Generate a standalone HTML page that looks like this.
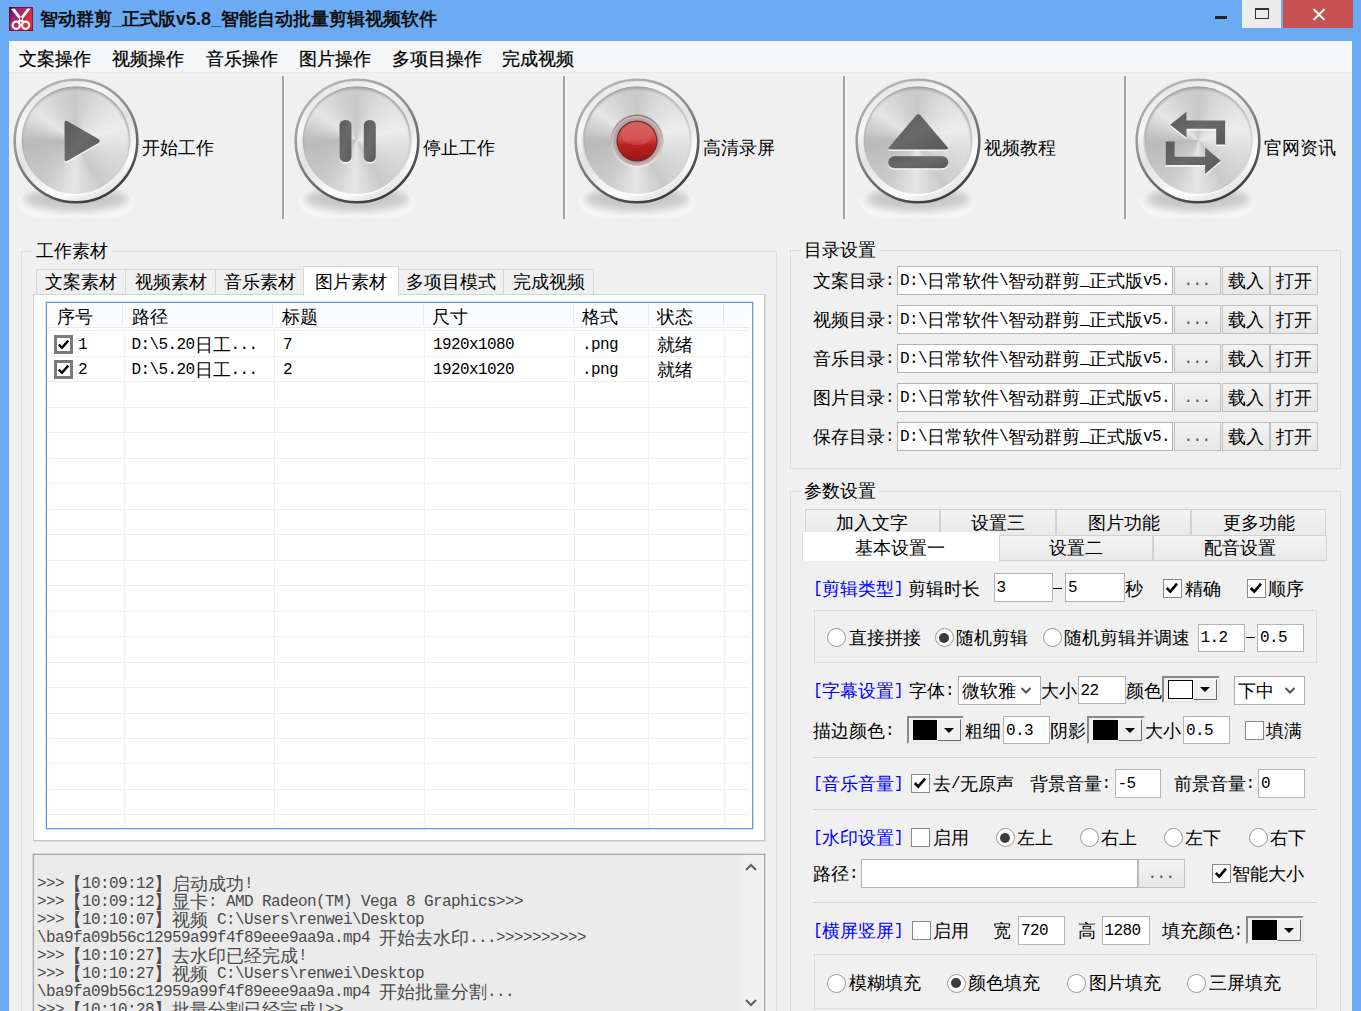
<!DOCTYPE html>
<html><head><meta charset="utf-8"><title>智动群剪</title><style>
*{margin:0;padding:0;box-sizing:border-box}
html,body{width:1361px;height:1011px;overflow:hidden}
body{background:#6aabf4;position:relative;font-family:"Liberation Sans",sans-serif;color:#000}
body div{position:absolute}
.s{font-size:18px;line-height:18px;white-space:nowrap}
.s .a{font-family:"Liberation Mono",monospace;font-size:16px;letter-spacing:-0.6px;line-height:0;position:relative;top:-2px}
.y{font-size:18px;line-height:18px;white-space:nowrap}
.s i,.y i{display:inline-block;width:18px;font-style:normal;text-align:center}
</style></head><body>
<div style="left:9px;top:7px;width:24px;height:24px;background:linear-gradient(125deg,#4a0e2e 0%,#9a2478 28%,#c42a5a 55%,#e0382e 80%,#b8202c 100%);box-shadow:inset 0 0 0 1px rgba(60,0,20,.5)">
<svg width="24" height="24" viewBox="0 0 24 24" style="position:absolute;left:0;top:0">
<g fill="#fff"><path d="M2,2 L5.6,1.6 L15.2,14.6 L13.4,16.2 Z"/><path d="M21.6,1.8 L18.2,1.4 L8.6,14.6 L10.4,16.2 Z"/></g>
<g stroke="#fff" stroke-width="2.2" fill="none"><circle cx="7.2" cy="18.2" r="3.6"/><circle cx="16.6" cy="18.2" r="3.6"/></g>
<rect x="11" y="10.6" width="2" height="2" fill="#a01838"/></svg></div>
<div class="y" style="left:40px;top:10px;font-weight:bold;color:#111"><i>智</i><i>动</i><i>群</i><i>剪</i>_<i>正</i><i>式</i><i>版</i>v5.8_<i>智</i><i>能</i><i>自</i><i>动</i><i>批</i><i>量</i><i>剪</i><i>辑</i><i>视</i><i>频</i><i>软</i><i>件</i></div>
<div style="left:1215px;top:16px;width:12px;height:3px;background:#222"></div>
<div style="left:1242px;top:0px;width:39px;height:28px;background:#ececec"></div>
<div style="left:1255px;top:8px;width:14px;height:11px;border:1px solid #333;border-top-width:2px"></div>
<div style="left:1283px;top:0px;width:70px;height:28px;background:#c75050"></div>
<svg style="position:absolute;left:1312px;top:8px" width="14" height="13" viewBox="0 0 14 13"><g stroke="#fff" stroke-width="2"><line x1="1.5" y1="1" x2="12.5" y2="12"/><line x1="12.5" y1="1" x2="1.5" y2="12"/></g></svg>
<div style="left:9px;top:41px;width:1343px;height:970px;background:#f0f0f0"></div>
<div style="left:9px;top:41px;width:1343px;height:31px;background:#f5f6f7"></div>
<div style="left:9px;top:72px;width:1343px;height:1px;background:#e9eaec"></div>
<div class="y" style="left:19px;top:50px;color:#000;-webkit-text-stroke:0.25px #000"><i>文</i><i>案</i><i>操</i><i>作</i></div>
<div class="y" style="left:112px;top:50px;color:#000;-webkit-text-stroke:0.25px #000"><i>视</i><i>频</i><i>操</i><i>作</i></div>
<div class="y" style="left:206px;top:50px;color:#000;-webkit-text-stroke:0.25px #000"><i>音</i><i>乐</i><i>操</i><i>作</i></div>
<div class="y" style="left:299px;top:50px;color:#000;-webkit-text-stroke:0.25px #000"><i>图</i><i>片</i><i>操</i><i>作</i></div>
<div class="y" style="left:392px;top:50px;color:#000;-webkit-text-stroke:0.25px #000"><i>多</i><i>项</i><i>目</i><i>操</i><i>作</i></div>
<div class="y" style="left:502px;top:50px;color:#000;-webkit-text-stroke:0.25px #000"><i>完</i><i>成</i><i>视</i><i>频</i></div>
<div style="left:282px;top:76px;width:2px;height:143px;background:#a3a3a3"></div>
<div style="left:284px;top:76px;width:1px;height:143px;background:#f9f9f9"></div>
<div style="left:563px;top:76px;width:2px;height:143px;background:#a3a3a3"></div>
<div style="left:565px;top:76px;width:1px;height:143px;background:#f9f9f9"></div>
<div style="left:843px;top:76px;width:2px;height:143px;background:#a3a3a3"></div>
<div style="left:845px;top:76px;width:1px;height:143px;background:#f9f9f9"></div>
<div style="left:1124px;top:76px;width:2px;height:143px;background:#a3a3a3"></div>
<div style="left:1126px;top:76px;width:1px;height:143px;background:#f9f9f9"></div>
<svg width="0" height="0" style="position:absolute"><defs><linearGradient id="gOut" x1="0.2" y1="0" x2="0.7" y2="1"><stop offset="0" stop-color="#bababa"/><stop offset="0.45" stop-color="#8e8e8e"/><stop offset="1" stop-color="#383838"/></linearGradient><linearGradient id="gRing" x1="0.1" y1="0" x2="0.6" y2="1"><stop offset="0" stop-color="#dedede"/><stop offset="0.3" stop-color="#f6f6f6"/><stop offset="0.55" stop-color="#e2e2e2"/><stop offset="0.85" stop-color="#fdfdfd"/><stop offset="1" stop-color="#e4e4e4"/></linearGradient><linearGradient id="gEdge" x1="0" y1="0" x2="0" y2="1"><stop offset="0" stop-color="#8e8e8e"/><stop offset="0.5" stop-color="#c8c8c8"/><stop offset="1" stop-color="#ffffff"/></linearGradient><linearGradient id="gIcon" x1="0" y1="0" x2="1" y2="1"><stop offset="0" stop-color="#5a5a5a"/><stop offset="0.5" stop-color="#6a6a6a"/><stop offset="1" stop-color="#585858"/></linearGradient><filter id="fBlur1" x="-20%" y="-50%" width="140%" height="200%"><feGaussianBlur stdDeviation="1.2"/></filter><filter id="fBlur4" x="-30%" y="-80%" width="160%" height="260%"><feGaussianBlur stdDeviation="4"/></filter><radialGradient id="gShadow" cx="0.5" cy="0.42" r="0.5"><stop offset="0" stop-color="#b4b4b4"/><stop offset="0.5" stop-color="#c8c8c8"/><stop offset="0.8" stop-color="#e4e4e4"/><stop offset="0.93" stop-color="#fcfcfc"/><stop offset="1" stop-color="#f0f0f0" stop-opacity="0"/></radialGradient></defs></svg>
<svg style="position:absolute;left:75.9px;top:140.6px;overflow:visible" width="1" height="1"><rect x="-58.5" y="43.8" width="117" height="33" rx="30" ry="16.5" fill="#f9f9f9" filter="url(#fBlur1)"/><ellipse cx="0" cy="58" rx="53" ry="12.5" fill="#c8c8c8" filter="url(#fBlur4)"/><circle r="61.3" fill="url(#gRing)" stroke="url(#gOut)" stroke-width="2.6"/><circle r="54.5" fill="url(#gEdge)"/></svg>
<div style="left:22.4px;top:87.1px;width:107px;height:107px;border-radius:50%;background:conic-gradient(from 0deg,#c8c8c8 0deg,#dcdcdc 30deg,#ececec 75deg,#d6d6d6 120deg,#cacaca 150deg,#e6e6e6 182deg,#cbcbcb 215deg,#bababa 268deg,#e6e6e6 305deg,#d2d2d2 335deg,#c8c8c8 360deg);box-shadow:inset 0 2px 2px rgba(0,0,0,.18)"></div>
<svg style="position:absolute;left:75.9px;top:140.6px;overflow:visible" width="1" height="1"><g transform="translate(0,1.6)" fill="#fbfbfb" opacity=".9"><path d="M-11.5,-18 Q-11.5,-21.5 -8.5,-19.8 L22.5,-2 Q25,0 22.5,2 L-8.5,19.8 Q-11.5,21.5 -11.5,18 Z"/></g><g fill="url(#gIcon)"><path d="M-11.5,-18 Q-11.5,-21.5 -8.5,-19.8 L22.5,-2 Q25,0 22.5,2 L-8.5,19.8 Q-11.5,21.5 -11.5,18 Z"/></g></svg>
<div class="y" style="left:142.0px;top:139px"><i>开</i><i>始</i><i>工</i><i>作</i></div>
<svg style="position:absolute;left:356.5px;top:140.6px;overflow:visible" width="1" height="1"><rect x="-58.5" y="43.8" width="117" height="33" rx="30" ry="16.5" fill="#f9f9f9" filter="url(#fBlur1)"/><ellipse cx="0" cy="58" rx="53" ry="12.5" fill="#c8c8c8" filter="url(#fBlur4)"/><circle r="61.3" fill="url(#gRing)" stroke="url(#gOut)" stroke-width="2.6"/><circle r="54.5" fill="url(#gEdge)"/></svg>
<div style="left:303.0px;top:87.1px;width:107px;height:107px;border-radius:50%;background:conic-gradient(from 0deg,#c8c8c8 0deg,#dcdcdc 30deg,#ececec 75deg,#d6d6d6 120deg,#cacaca 150deg,#e6e6e6 182deg,#cbcbcb 215deg,#bababa 268deg,#e6e6e6 305deg,#d2d2d2 335deg,#c8c8c8 360deg);box-shadow:inset 0 2px 2px rgba(0,0,0,.18)"></div>
<svg style="position:absolute;left:356.5px;top:140.6px;overflow:visible" width="1" height="1"><g transform="translate(0,1.6)" fill="#fbfbfb" opacity=".9"><rect x="-17.5" y="-21" width="12" height="42" rx="5.5"/><rect x="6.8" y="-21" width="12" height="42" rx="5.5"/></g><g fill="url(#gIcon)"><rect x="-17.5" y="-21" width="12" height="42" rx="5.5"/><rect x="6.8" y="-21" width="12" height="42" rx="5.5"/></g></svg>
<div class="y" style="left:422.6px;top:139px"><i>停</i><i>止</i><i>工</i><i>作</i></div>
<svg style="position:absolute;left:637.1px;top:140.6px;overflow:visible" width="1" height="1"><rect x="-58.5" y="43.8" width="117" height="33" rx="30" ry="16.5" fill="#f9f9f9" filter="url(#fBlur1)"/><ellipse cx="0" cy="58" rx="53" ry="12.5" fill="#c8c8c8" filter="url(#fBlur4)"/><circle r="61.3" fill="url(#gRing)" stroke="url(#gOut)" stroke-width="2.6"/><circle r="54.5" fill="url(#gEdge)"/></svg>
<div style="left:583.6px;top:87.1px;width:107px;height:107px;border-radius:50%;background:conic-gradient(from 0deg,#c8c8c8 0deg,#dcdcdc 30deg,#ececec 75deg,#d6d6d6 120deg,#cacaca 150deg,#e6e6e6 182deg,#cbcbcb 215deg,#bababa 268deg,#e6e6e6 305deg,#d2d2d2 335deg,#c8c8c8 360deg);box-shadow:inset 0 2px 2px rgba(0,0,0,.18)"></div>
<svg style="position:absolute;left:637.1px;top:140.6px;overflow:visible" width="1" height="1"><defs><radialGradient id="gRec" cx="0.5" cy="0.5" r="0.5"><stop offset="0" stop-color="#a89c9c"/><stop offset="0.8" stop-color="#a89c9c"/><stop offset="0.92" stop-color="#b8aaaa"/><stop offset="1" stop-color="#d4c4c4"/></radialGradient><linearGradient id="gRed" x1="0" y1="0" x2="0" y2="1"><stop offset="0" stop-color="#d85c5c"/><stop offset="0.45" stop-color="#cf4444"/><stop offset="0.6" stop-color="#b92222"/><stop offset="1" stop-color="#9e1515"/></linearGradient><linearGradient id="gRecEdge" x1="0" y1="0" x2="0" y2="1"><stop offset="0" stop-color="#8a8080"/><stop offset="1" stop-color="#fde8e8"/></linearGradient></defs><circle r="26.5" fill="url(#gRecEdge)"/><circle r="25" fill="url(#gRec)"/><circle r="20.5" fill="#7a2424"/><circle r="19.3" fill="url(#gRed)"/><ellipse cx="0" cy="-7" rx="16" ry="11" fill="#e07070" opacity=".35"/></svg>
<div class="y" style="left:703.2px;top:139px"><i>高</i><i>清</i><i>录</i><i>屏</i></div>
<svg style="position:absolute;left:917.7px;top:140.6px;overflow:visible" width="1" height="1"><rect x="-58.5" y="43.8" width="117" height="33" rx="30" ry="16.5" fill="#f9f9f9" filter="url(#fBlur1)"/><ellipse cx="0" cy="58" rx="53" ry="12.5" fill="#c8c8c8" filter="url(#fBlur4)"/><circle r="61.3" fill="url(#gRing)" stroke="url(#gOut)" stroke-width="2.6"/><circle r="54.5" fill="url(#gEdge)"/></svg>
<div style="left:864.2px;top:87.1px;width:107px;height:107px;border-radius:50%;background:conic-gradient(from 0deg,#c8c8c8 0deg,#dcdcdc 30deg,#ececec 75deg,#d6d6d6 120deg,#cacaca 150deg,#e6e6e6 182deg,#cbcbcb 215deg,#bababa 268deg,#e6e6e6 305deg,#d2d2d2 335deg,#c8c8c8 360deg);box-shadow:inset 0 2px 2px rgba(0,0,0,.18)"></div>
<svg style="position:absolute;left:917.7px;top:140.6px;overflow:visible" width="1" height="1"><g transform="translate(0,1.6)" fill="#fbfbfb" opacity=".9"><path d="M-27.7,8.4 Q-30.5,8.4 -28.7,6 L-2,-25.5 Q0.3,-28 2.6,-25.5 L29.3,6 Q31,8.4 28.3,8.4 Z"/><rect x="-29.7" y="15.2" width="60" height="12" rx="6"/></g><g fill="url(#gIcon)"><path d="M-27.7,8.4 Q-30.5,8.4 -28.7,6 L-2,-25.5 Q0.3,-28 2.6,-25.5 L29.3,6 Q31,8.4 28.3,8.4 Z"/><rect x="-29.7" y="15.2" width="60" height="12" rx="6"/></g></svg>
<div class="y" style="left:983.8px;top:139px"><i>视</i><i>频</i><i>教</i><i>程</i></div>
<svg style="position:absolute;left:1198.3px;top:140.6px;overflow:visible" width="1" height="1"><rect x="-58.5" y="43.8" width="117" height="33" rx="30" ry="16.5" fill="#f9f9f9" filter="url(#fBlur1)"/><ellipse cx="0" cy="58" rx="53" ry="12.5" fill="#c8c8c8" filter="url(#fBlur4)"/><circle r="61.3" fill="url(#gRing)" stroke="url(#gOut)" stroke-width="2.6"/><circle r="54.5" fill="url(#gEdge)"/></svg>
<div style="left:1144.8px;top:87.1px;width:107px;height:107px;border-radius:50%;background:conic-gradient(from 0deg,#c8c8c8 0deg,#dcdcdc 30deg,#ececec 75deg,#d6d6d6 120deg,#cacaca 150deg,#e6e6e6 182deg,#cbcbcb 215deg,#bababa 268deg,#e6e6e6 305deg,#d2d2d2 335deg,#c8c8c8 360deg);box-shadow:inset 0 2px 2px rgba(0,0,0,.18)"></div>
<svg style="position:absolute;left:1198.3px;top:140.6px;overflow:visible" width="1" height="1"><g transform="translate(0,1.6)" fill="#fbfbfb" opacity=".9"><path d="M-27.8,-16.3 L-11.5,-29.3 L-11.5,-20.4 L27.1,-20.4 L27.1,3.4 L18.2,3.4 L18.2,-12.2 L-11.5,-12.2 L-11.5,-3.3 Z"/><path d="M22.7,19.7 L7.1,6.4 L7.1,15.7 L-23.3,15.7 L-23.3,0.4 L-32.3,0.4 L-32.3,24.1 L7.1,24.1 L7.1,33 Z"/></g><g fill="url(#gIcon)"><path d="M-27.8,-16.3 L-11.5,-29.3 L-11.5,-20.4 L27.1,-20.4 L27.1,3.4 L18.2,3.4 L18.2,-12.2 L-11.5,-12.2 L-11.5,-3.3 Z"/><path d="M22.7,19.7 L7.1,6.4 L7.1,15.7 L-23.3,15.7 L-23.3,0.4 L-32.3,0.4 L-32.3,24.1 L7.1,24.1 L7.1,33 Z"/></g></svg>
<div class="y" style="left:1264.4px;top:139px"><i>官</i><i>网</i><i>资</i><i>讯</i></div>
<div style="left:21px;top:251px;width:756px;height:800px;border:1px solid #dcdcdc"></div>
<div style="left:33px;top:241px;width:78px;height:20px;background:#f0f0f0"></div>
<div class="s" style="left:36px;top:242px;"><i>工</i><i>作</i><i>素</i><i>材</i></div>
<div style="left:33px;top:294px;width:732px;height:547px;background:#fff;border:1px solid #d2d2d2;border-right-color:#c4c4c4;border-bottom-color:#c4c4c4;box-shadow:1px 1px 0 rgba(196,196,196,.4)"></div>
<div style="left:36px;top:269px;width:90px;height:25px;background:#f0f0f0;border:1px solid #d9d9d9;border-bottom:none"></div>
<div class="s" style="left:45.0px;top:273px;"><i>文</i><i>案</i><i>素</i><i>材</i></div>
<div style="left:125px;top:269px;width:91px;height:25px;background:#f0f0f0;border:1px solid #d9d9d9;border-bottom:none"></div>
<div class="s" style="left:134.5px;top:273px;"><i>视</i><i>频</i><i>素</i><i>材</i></div>
<div style="left:215px;top:269px;width:89px;height:25px;background:#f0f0f0;border:1px solid #d9d9d9;border-bottom:none"></div>
<div class="s" style="left:223.5px;top:273px;"><i>音</i><i>乐</i><i>素</i><i>材</i></div>
<div style="left:398px;top:269px;width:106px;height:25px;background:#f0f0f0;border:1px solid #d9d9d9;border-bottom:none"></div>
<div class="s" style="left:406.0px;top:273px;"><i>多</i><i>项</i><i>目</i><i>模</i><i>式</i></div>
<div style="left:503px;top:269px;width:91px;height:25px;background:#f0f0f0;border:1px solid #d9d9d9;border-bottom:none"></div>
<div class="s" style="left:512.5px;top:273px;"><i>完</i><i>成</i><i>视</i><i>频</i></div>
<div style="left:303px;top:266px;width:96px;height:30px;background:#fff;border:1px solid #d9d9d9;border-bottom:none"></div>
<div class="s" style="left:315.0px;top:273px;"><i>图</i><i>片</i><i>素</i><i>材</i></div>
<div style="left:46px;top:302px;width:707px;height:527px;background:#fff;border:1px solid #5a9ae6;box-shadow:0 0 0 1px rgba(110,165,235,.3)"></div>
<div style="left:47px;top:303px;width:703px;height:24px;background:#fbfcfd"></div>
<div style="left:47px;top:327px;width:703px;height:1px;background:#dfe8f3"></div>
<div style="left:122px;top:304px;width:1px;height:22px;background:#e3ebf5"></div>
<div style="left:272px;top:304px;width:1px;height:22px;background:#e3ebf5"></div>
<div style="left:423px;top:304px;width:1px;height:22px;background:#e3ebf5"></div>
<div style="left:573px;top:304px;width:1px;height:22px;background:#e3ebf5"></div>
<div style="left:648px;top:304px;width:1px;height:22px;background:#e3ebf5"></div>
<div style="left:723px;top:304px;width:1px;height:22px;background:#e3ebf5"></div>
<div class="s" style="left:57px;top:308px;"><i>序</i><i>号</i></div>
<div class="s" style="left:131.5px;top:308px;"><i>路</i><i>径</i></div>
<div class="s" style="left:282px;top:308px;"><i>标</i><i>题</i></div>
<div class="s" style="left:432px;top:308px;"><i>尺</i><i>寸</i></div>
<div class="s" style="left:582px;top:308px;"><i>格</i><i>式</i></div>
<div class="s" style="left:657px;top:308px;"><i>状</i><i>态</i></div>
<div style="left:47px;top:330px;width:703px;height:1px;background:#efefef"></div>
<div style="left:47px;top:356px;width:703px;height:1px;background:#efefef"></div>
<div style="left:47px;top:381px;width:703px;height:1px;background:#efefef"></div>
<div style="left:47px;top:407px;width:703px;height:1px;background:#efefef"></div>
<div style="left:47px;top:432px;width:703px;height:1px;background:#efefef"></div>
<div style="left:47px;top:458px;width:703px;height:1px;background:#efefef"></div>
<div style="left:47px;top:483px;width:703px;height:1px;background:#efefef"></div>
<div style="left:47px;top:509px;width:703px;height:1px;background:#efefef"></div>
<div style="left:47px;top:534px;width:703px;height:1px;background:#efefef"></div>
<div style="left:47px;top:560px;width:703px;height:1px;background:#efefef"></div>
<div style="left:47px;top:585px;width:703px;height:1px;background:#efefef"></div>
<div style="left:47px;top:611px;width:703px;height:1px;background:#efefef"></div>
<div style="left:47px;top:636px;width:703px;height:1px;background:#efefef"></div>
<div style="left:47px;top:662px;width:703px;height:1px;background:#efefef"></div>
<div style="left:47px;top:687px;width:703px;height:1px;background:#efefef"></div>
<div style="left:47px;top:713px;width:703px;height:1px;background:#efefef"></div>
<div style="left:47px;top:738px;width:703px;height:1px;background:#efefef"></div>
<div style="left:47px;top:763px;width:703px;height:1px;background:#efefef"></div>
<div style="left:47px;top:789px;width:703px;height:1px;background:#efefef"></div>
<div style="left:47px;top:814px;width:703px;height:1px;background:#efefef"></div>
<div style="left:124px;top:330px;width:1px;height:498px;background:#efefef"></div>
<div style="left:274px;top:330px;width:1px;height:498px;background:#efefef"></div>
<div style="left:424px;top:330px;width:1px;height:498px;background:#efefef"></div>
<div style="left:574px;top:330px;width:1px;height:498px;background:#efefef"></div>
<div style="left:648px;top:330px;width:1px;height:498px;background:#efefef"></div>
<div style="left:724px;top:330px;width:1px;height:498px;background:#efefef"></div>
<div style="left:54px;top:334.5px;width:19px;height:19px;border:3px solid #7a7a7a;background:#fff"><svg width="13" height="13" viewBox="0 0 13 13" style="position:absolute;left:0;top:0"><path d="M1.8,6.5 L5,9.8 L11.2,2.6" fill="none" stroke="#000" stroke-width="2.4"/></svg></div>
<div class="s" style="left:78px;top:335.5px;"><span class="a">1</span></div>
<div class="s" style="left:131.5px;top:335.5px;"><span class="a">D:\5.20</span><i>日</i><i>工</i><span class="a">...</span></div>
<div class="s" style="left:283px;top:335.5px;"><span class="a">7</span></div>
<div class="s" style="left:433px;top:335.5px;"><span class="a">1920x1080</span></div>
<div class="s" style="left:582px;top:335.5px;"><span class="a">.png</span></div>
<div class="s" style="left:656.5px;top:335.5px;"><i>就</i><i>绪</i></div>
<div style="left:54px;top:360.0px;width:19px;height:19px;border:3px solid #7a7a7a;background:#fff"><svg width="13" height="13" viewBox="0 0 13 13" style="position:absolute;left:0;top:0"><path d="M1.8,6.5 L5,9.8 L11.2,2.6" fill="none" stroke="#000" stroke-width="2.4"/></svg></div>
<div class="s" style="left:78px;top:360.97px;"><span class="a">2</span></div>
<div class="s" style="left:131.5px;top:360.97px;"><span class="a">D:\5.20</span><i>日</i><i>工</i><span class="a">...</span></div>
<div class="s" style="left:283px;top:360.97px;"><span class="a">2</span></div>
<div class="s" style="left:433px;top:360.97px;"><span class="a">1920x1020</span></div>
<div class="s" style="left:582px;top:360.97px;"><span class="a">.png</span></div>
<div class="s" style="left:656.5px;top:360.97px;"><i>就</i><i>绪</i></div>
<div style="left:33px;top:854px;width:732px;height:200px;background:#ebebeb;border:1px solid #a6a6ae;box-shadow:0 0 0 1px rgba(166,166,174,.3)"></div>
<div style="left:740px;top:855px;width:24px;height:160px;background:#f0f0f0"></div>
<svg style="position:absolute;left:744px;top:862px" width="14" height="10" viewBox="0 0 14 10"><path d="M2,8 L7,3 L12,8" fill="none" stroke="#606060" stroke-width="2"/></svg>
<svg style="position:absolute;left:744px;top:998px" width="14" height="10" viewBox="0 0 14 10"><path d="M2,2 L7,7 L12,2" fill="none" stroke="#606060" stroke-width="2"/></svg>
<div class="s" style="left:37px;top:875px;color:#4a4a4a"><span class="a">&gt;&gt;&gt;</span><i>【</i><span class="a">10:09:12</span><i>】</i><i>启</i><i>动</i><i>成</i><i>功</i><span class="a">!</span></div>
<div class="s" style="left:37px;top:893px;color:#4a4a4a"><span class="a">&gt;&gt;&gt;</span><i>【</i><span class="a">10:09:12</span><i>】</i><i>显</i><i>卡</i><span class="a">:&nbsp;AMD&nbsp;Radeon(TM)&nbsp;Vega&nbsp;8&nbsp;Graphics&gt;&gt;&gt;</span></div>
<div class="s" style="left:37px;top:911px;color:#4a4a4a"><span class="a">&gt;&gt;&gt;</span><i>【</i><span class="a">10:10:07</span><i>】</i><i>视</i><i>频</i><span class="a">&nbsp;C:\Users\renwei\Desktop</span></div>
<div class="s" style="left:37px;top:929px;color:#4a4a4a"><span class="a">\ba9fa09b56c12959a99f4f89eee9aa9a.mp4&nbsp;</span><i>开</i><i>始</i><i>去</i><i>水</i><i>印</i><span class="a">...&gt;&gt;&gt;&gt;&gt;&gt;&gt;&gt;&gt;&gt;</span></div>
<div class="s" style="left:37px;top:947px;color:#4a4a4a"><span class="a">&gt;&gt;&gt;</span><i>【</i><span class="a">10:10:27</span><i>】</i><i>去</i><i>水</i><i>印</i><i>已</i><i>经</i><i>完</i><i>成</i><span class="a">!</span></div>
<div class="s" style="left:37px;top:965px;color:#4a4a4a"><span class="a">&gt;&gt;&gt;</span><i>【</i><span class="a">10:10:27</span><i>】</i><i>视</i><i>频</i><span class="a">&nbsp;C:\Users\renwei\Desktop</span></div>
<div class="s" style="left:37px;top:983px;color:#4a4a4a"><span class="a">\ba9fa09b56c12959a99f4f89eee9aa9a.mp4&nbsp;</span><i>开</i><i>始</i><i>批</i><i>量</i><i>分</i><i>割</i><span class="a">...</span></div>
<div class="s" style="left:37px;top:1001px;color:#4a4a4a"><span class="a">&gt;&gt;&gt;</span><i>【</i><span class="a">10:10:28</span><i>】</i><i>批</i><i>量</i><i>分</i><i>割</i><i>已</i><i>经</i><i>完</i><i>成</i><span class="a">!&gt;&gt;</span></div>
<div style="left:790px;top:250px;width:551px;height:219px;border:1px solid #dcdcdc"></div>
<div style="left:801px;top:241px;width:78px;height:20px;background:#f0f0f0"></div>
<div class="s" style="left:804px;top:240.5px;"><i>目</i><i>录</i><i>设</i><i>置</i></div>
<div class="s" style="left:813px;top:272.0px;"><i>文</i><i>案</i><i>目</i><i>录</i><span class="a">:</span></div>
<div style="left:897px;top:266.0px;width:276px;height:29px;background:#fff;border:1px solid #b4b4b4;"></div>
<div class="s" style="left:900px;top:272.0px;"><span class="a">D:\</span><i>日</i><i>常</i><i>软</i><i>件</i><span class="a">\</span><i>智</i><i>动</i><i>群</i><i>剪</i><span class="a">_</span><i>正</i><i>式</i><i>版</i><span class="a">v5.</span></div>
<div style="left:1173.5px;top:266.0px;width:47px;height:29px;background:linear-gradient(#f3f3f3,#e7e7e7);border:1px solid #c0c0c0"></div>
<div class="s" style="left:1183.5px;top:272.0px;color:#555"><span class="a">...</span></div>
<div style="left:1221.5px;top:266.0px;width:48px;height:29px;background:linear-gradient(#f3f3f3,#e7e7e7);border:1px solid #c0c0c0"></div>
<div class="s" style="left:1227.5px;top:272.0px;color:#000"><i>载</i><i>入</i></div>
<div style="left:1269.5px;top:266.0px;width:48px;height:29px;background:linear-gradient(#f3f3f3,#e7e7e7);border:1px solid #c0c0c0"></div>
<div class="s" style="left:1275.5px;top:272.0px;color:#000"><i>打</i><i>开</i></div>
<div class="s" style="left:813px;top:311.1px;"><i>视</i><i>频</i><i>目</i><i>录</i><span class="a">:</span></div>
<div style="left:897px;top:305.1px;width:276px;height:29px;background:#fff;border:1px solid #b4b4b4;"></div>
<div class="s" style="left:900px;top:311.1px;"><span class="a">D:\</span><i>日</i><i>常</i><i>软</i><i>件</i><span class="a">\</span><i>智</i><i>动</i><i>群</i><i>剪</i><span class="a">_</span><i>正</i><i>式</i><i>版</i><span class="a">v5.</span></div>
<div style="left:1173.5px;top:305.1px;width:47px;height:29px;background:linear-gradient(#f3f3f3,#e7e7e7);border:1px solid #c0c0c0"></div>
<div class="s" style="left:1183.5px;top:311.1px;color:#555"><span class="a">...</span></div>
<div style="left:1221.5px;top:305.1px;width:48px;height:29px;background:linear-gradient(#f3f3f3,#e7e7e7);border:1px solid #c0c0c0"></div>
<div class="s" style="left:1227.5px;top:311.1px;color:#000"><i>载</i><i>入</i></div>
<div style="left:1269.5px;top:305.1px;width:48px;height:29px;background:linear-gradient(#f3f3f3,#e7e7e7);border:1px solid #c0c0c0"></div>
<div class="s" style="left:1275.5px;top:311.1px;color:#000"><i>打</i><i>开</i></div>
<div class="s" style="left:813px;top:350.2px;"><i>音</i><i>乐</i><i>目</i><i>录</i><span class="a">:</span></div>
<div style="left:897px;top:344.2px;width:276px;height:29px;background:#fff;border:1px solid #b4b4b4;"></div>
<div class="s" style="left:900px;top:350.2px;"><span class="a">D:\</span><i>日</i><i>常</i><i>软</i><i>件</i><span class="a">\</span><i>智</i><i>动</i><i>群</i><i>剪</i><span class="a">_</span><i>正</i><i>式</i><i>版</i><span class="a">v5.</span></div>
<div style="left:1173.5px;top:344.2px;width:47px;height:29px;background:linear-gradient(#f3f3f3,#e7e7e7);border:1px solid #c0c0c0"></div>
<div class="s" style="left:1183.5px;top:350.2px;color:#555"><span class="a">...</span></div>
<div style="left:1221.5px;top:344.2px;width:48px;height:29px;background:linear-gradient(#f3f3f3,#e7e7e7);border:1px solid #c0c0c0"></div>
<div class="s" style="left:1227.5px;top:350.2px;color:#000"><i>载</i><i>入</i></div>
<div style="left:1269.5px;top:344.2px;width:48px;height:29px;background:linear-gradient(#f3f3f3,#e7e7e7);border:1px solid #c0c0c0"></div>
<div class="s" style="left:1275.5px;top:350.2px;color:#000"><i>打</i><i>开</i></div>
<div class="s" style="left:813px;top:389.3px;"><i>图</i><i>片</i><i>目</i><i>录</i><span class="a">:</span></div>
<div style="left:897px;top:383.3px;width:276px;height:29px;background:#fff;border:1px solid #b4b4b4;"></div>
<div class="s" style="left:900px;top:389.3px;"><span class="a">D:\</span><i>日</i><i>常</i><i>软</i><i>件</i><span class="a">\</span><i>智</i><i>动</i><i>群</i><i>剪</i><span class="a">_</span><i>正</i><i>式</i><i>版</i><span class="a">v5.</span></div>
<div style="left:1173.5px;top:383.3px;width:47px;height:29px;background:linear-gradient(#f3f3f3,#e7e7e7);border:1px solid #c0c0c0"></div>
<div class="s" style="left:1183.5px;top:389.3px;color:#555"><span class="a">...</span></div>
<div style="left:1221.5px;top:383.3px;width:48px;height:29px;background:linear-gradient(#f3f3f3,#e7e7e7);border:1px solid #c0c0c0"></div>
<div class="s" style="left:1227.5px;top:389.3px;color:#000"><i>载</i><i>入</i></div>
<div style="left:1269.5px;top:383.3px;width:48px;height:29px;background:linear-gradient(#f3f3f3,#e7e7e7);border:1px solid #c0c0c0"></div>
<div class="s" style="left:1275.5px;top:389.3px;color:#000"><i>打</i><i>开</i></div>
<div class="s" style="left:813px;top:428.4px;"><i>保</i><i>存</i><i>目</i><i>录</i><span class="a">:</span></div>
<div style="left:897px;top:422.4px;width:276px;height:29px;background:#fff;border:1px solid #b4b4b4;"></div>
<div class="s" style="left:900px;top:428.4px;"><span class="a">D:\</span><i>日</i><i>常</i><i>软</i><i>件</i><span class="a">\</span><i>智</i><i>动</i><i>群</i><i>剪</i><span class="a">_</span><i>正</i><i>式</i><i>版</i><span class="a">v5.</span></div>
<div style="left:1173.5px;top:422.4px;width:47px;height:29px;background:linear-gradient(#f3f3f3,#e7e7e7);border:1px solid #c0c0c0"></div>
<div class="s" style="left:1183.5px;top:428.4px;color:#555"><span class="a">...</span></div>
<div style="left:1221.5px;top:422.4px;width:48px;height:29px;background:linear-gradient(#f3f3f3,#e7e7e7);border:1px solid #c0c0c0"></div>
<div class="s" style="left:1227.5px;top:428.4px;color:#000"><i>载</i><i>入</i></div>
<div style="left:1269.5px;top:422.4px;width:48px;height:29px;background:linear-gradient(#f3f3f3,#e7e7e7);border:1px solid #c0c0c0"></div>
<div class="s" style="left:1275.5px;top:428.4px;color:#000"><i>打</i><i>开</i></div>
<div style="left:790px;top:491px;width:551px;height:600px;border:1px solid #dcdcdc"></div>
<div style="left:801px;top:482px;width:78px;height:20px;background:#f0f0f0"></div>
<div class="s" style="left:804px;top:481.5px;"><i>参</i><i>数</i><i>设</i><i>置</i></div>
<div style="left:804.5px;top:509px;width:135.0px;height:26px;background:linear-gradient(#f3f3f3,#e9e9e9);border:1px solid #d2d2d2;border-bottom:none"></div>
<div class="s" style="left:836.0px;top:514px;"><i>加</i><i>入</i><i>文</i><i>字</i></div>
<div style="left:939.5px;top:509px;width:116.5px;height:26px;background:linear-gradient(#f3f3f3,#e9e9e9);border:1px solid #d2d2d2;border-bottom:none"></div>
<div class="s" style="left:970.75px;top:514px;"><i>设</i><i>置</i><i>三</i></div>
<div style="left:1056.0px;top:509px;width:135.0px;height:26px;background:linear-gradient(#f3f3f3,#e9e9e9);border:1px solid #d2d2d2;border-bottom:none"></div>
<div class="s" style="left:1087.5px;top:514px;"><i>图</i><i>片</i><i>功</i><i>能</i></div>
<div style="left:1191.0px;top:509px;width:135.0px;height:26px;background:linear-gradient(#f3f3f3,#e9e9e9);border:1px solid #d2d2d2;border-bottom:none"></div>
<div class="s" style="left:1222.5px;top:514px;"><i>更</i><i>多</i><i>功</i><i>能</i></div>
<div style="left:998.5px;top:534.5px;width:154.5px;height:26px;background:linear-gradient(#f3f3f3,#e9e9e9);border:1px solid #d2d2d2"></div>
<div class="s" style="left:1048.75px;top:539px;"><i>设</i><i>置</i><i>二</i></div>
<div style="left:1153.0px;top:534.5px;width:174.0px;height:26px;background:linear-gradient(#f3f3f3,#e9e9e9);border:1px solid #d2d2d2"></div>
<div class="s" style="left:1204.0px;top:539px;"><i>配</i><i>音</i><i>设</i><i>置</i></div>
<div style="left:802px;top:531.5px;width:197px;height:29px;background:#fff;border-left:1px solid #e0e0e0"></div>
<div class="s" style="left:854.5px;top:539px;"><i>基</i><i>本</i><i>设</i><i>置</i><i>一</i></div>
<div class="s" style="left:813px;top:579.5px;color:#0000ff"><span class="a">[</span><i>剪</i><i>辑</i><i>类</i><i>型</i><span class="a">]</span></div>
<div class="s" style="left:908px;top:579.5px;"><i>剪</i><i>辑</i><i>时</i><i>长</i></div>
<div style="left:993.5px;top:573px;width:59px;height:29px;background:#fff;border:1px solid #b4b4b4;"></div>
<div class="s" style="left:996.5px;top:579.0px;"><span class="a">3</span></div>
<div style="left:1053px;top:587.5px;width:9px;height:1px;background:#000"></div>
<div style="left:1065px;top:573px;width:60px;height:29px;background:#fff;border:1px solid #b4b4b4;"></div>
<div class="s" style="left:1068px;top:579.0px;"><span class="a">5</span></div>
<div class="s" style="left:1125px;top:579.5px;"><i>秒</i></div>
<div style="left:1163.0px;top:578.5px;width:19px;height:19px;border:1.5px solid #8a8a8a;background:#fff"><svg width="16" height="16" viewBox="0 0 16 16" style="position:absolute;left:0;top:0"><path d="M2.8,8 L6.3,11.6 L13,3.6" fill="none" stroke="#000" stroke-width="2.6"/></svg></div>
<div class="s" style="left:1185px;top:579.5px;"><i>精</i><i>确</i></div>
<div style="left:1247.0px;top:578.5px;width:19px;height:19px;border:1.5px solid #8a8a8a;background:#fff"><svg width="16" height="16" viewBox="0 0 16 16" style="position:absolute;left:0;top:0"><path d="M2.8,8 L6.3,11.6 L13,3.6" fill="none" stroke="#000" stroke-width="2.6"/></svg></div>
<div class="s" style="left:1268px;top:579.5px;"><i>顺</i><i>序</i></div>
<div style="left:814px;top:609.5px;width:503px;height:53px;border:1px solid #dcdcdc"></div>
<div style="left:827.0px;top:628.3px;width:19px;height:19px;border-radius:50%;border:1.5px solid #9a9a9a;background:#fff"></div>
<div class="s" style="left:849px;top:628.5px;"><i>直</i><i>接</i><i>拼</i><i>接</i></div>
<div style="left:934.5px;top:628.3px;width:19px;height:19px;border-radius:50%;border:1.5px solid #9a9a9a;background:#fff"><div style="left:calc(50% - 5px);top:calc(50% - 5px);width:10px;height:10px;border-radius:50%;background:#3c3c3c"></div></div>
<div class="s" style="left:956px;top:628.5px;"><i>随</i><i>机</i><i>剪</i><i>辑</i></div>
<div style="left:1042.5px;top:628.3px;width:19px;height:19px;border-radius:50%;border:1.5px solid #9a9a9a;background:#fff"></div>
<div class="s" style="left:1064px;top:628.5px;"><i>随</i><i>机</i><i>剪</i><i>辑</i><i>并</i><i>调</i><i>速</i></div>
<div style="left:1197.5px;top:623.5px;width:47px;height:28px;background:#fff;border:1px solid #b4b4b4;"></div>
<div class="s" style="left:1200.5px;top:629.0px;"><span class="a">1.2</span></div>
<div style="left:1246px;top:637px;width:9px;height:1px;background:#000"></div>
<div style="left:1257px;top:623.5px;width:47px;height:28px;background:#fff;border:1px solid #b4b4b4;"></div>
<div class="s" style="left:1260px;top:629.0px;"><span class="a">0.5</span></div>
<div class="s" style="left:813px;top:681.5px;color:#0000ff"><span class="a">[</span><i>字</i><i>幕</i><i>设</i><i>置</i><span class="a">]</span></div>
<div class="s" style="left:909px;top:681.5px;"><i>字</i><i>体</i><span class="a">:</span></div>
<div style="left:957.5px;top:675.5px;width:83px;height:29px;background:#fff;border:1px solid #acacac"></div>
<div class="s" style="left:961.5px;top:681.5px;"><i>微</i><i>软</i><i>雅</i></div>
<svg style="position:absolute;left:1019.5px;top:686.0px" width="12" height="9" viewBox="0 0 12 9"><path d="M1.5,2 L6,6.5 L10.5,2" fill="none" stroke="#555" stroke-width="2"/></svg>
<div class="s" style="left:1041px;top:681.5px;"><i>大</i><i>小</i></div>
<div style="left:1077.5px;top:676px;width:48px;height:28px;background:#fff;border:1px solid #b4b4b4;"></div>
<div class="s" style="left:1080.5px;top:681.5px;"><span class="a">22</span></div>
<div class="s" style="left:1126px;top:681.5px;"><i>颜</i><i>色</i></div>
<div style="left:1161.5px;top:675.5px;width:58.0px;height:27.0px;background:#f0f0f0;border:2px solid;border-color:#8a8a8a #e8e8e8 #e8e8e8 #8a8a8a">
<div style="left:4px;top:2px;width:25px;height:19px;background:#fff;border:1px solid #000"></div>
<div style="right:1px;top:1px;width:24px;height:21px;background:#f0f0f0;border:1.5px solid;border-color:#fff #6a6a6a #6a6a6a #fff"><svg width="12" height="7" style="position:absolute;left:5px;top:6px" viewBox="0 0 12 7"><path d="M1,1 L11,1 L6,6 Z" fill="#000"/></svg></div>
</div>
<div style="left:1233.5px;top:675.5px;width:71px;height:29px;background:#fff;border:1px solid #acacac"></div>
<div class="s" style="left:1237.5px;top:681.5px;"><i>下</i><i>中</i></div>
<svg style="position:absolute;left:1283.5px;top:686.0px" width="12" height="9" viewBox="0 0 12 9"><path d="M1.5,2 L6,6.5 L10.5,2" fill="none" stroke="#555" stroke-width="2"/></svg>
<div class="s" style="left:813px;top:722.0px;"><i>描</i><i>边</i><i>颜</i><i>色</i><span class="a">:</span></div>
<div style="left:906.5px;top:715.5px;width:57.0px;height:28.0px;background:#f0f0f0;border:2px solid;border-color:#8a8a8a #e8e8e8 #e8e8e8 #8a8a8a">
<div style="left:4px;top:2px;width:24px;height:20px;background:#000;border:1px solid #000"></div>
<div style="right:1px;top:1px;width:24px;height:22px;background:#f0f0f0;border:1.5px solid;border-color:#fff #6a6a6a #6a6a6a #fff"><svg width="12" height="7" style="position:absolute;left:5px;top:7px" viewBox="0 0 12 7"><path d="M1,1 L11,1 L6,6 Z" fill="#000"/></svg></div>
</div>
<div class="s" style="left:965px;top:722.0px;"><i>粗</i><i>细</i></div>
<div style="left:1003px;top:716px;width:47px;height:28px;background:#fff;border:1px solid #b4b4b4;"></div>
<div class="s" style="left:1006px;top:721.5px;"><span class="a">0.3</span></div>
<div class="s" style="left:1050px;top:722.0px;"><i>阴</i><i>影</i></div>
<div style="left:1087.0px;top:715.5px;width:58.0px;height:28.0px;background:#f0f0f0;border:2px solid;border-color:#8a8a8a #e8e8e8 #e8e8e8 #8a8a8a">
<div style="left:4px;top:2px;width:25px;height:20px;background:#000;border:1px solid #000"></div>
<div style="right:1px;top:1px;width:24px;height:22px;background:#f0f0f0;border:1.5px solid;border-color:#fff #6a6a6a #6a6a6a #fff"><svg width="12" height="7" style="position:absolute;left:5px;top:7px" viewBox="0 0 12 7"><path d="M1,1 L11,1 L6,6 Z" fill="#000"/></svg></div>
</div>
<div class="s" style="left:1145px;top:722.0px;"><i>大</i><i>小</i></div>
<div style="left:1183px;top:716px;width:47px;height:28px;background:#fff;border:1px solid #b4b4b4;"></div>
<div class="s" style="left:1186px;top:721.5px;"><span class="a">0.5</span></div>
<div style="left:1244.5px;top:721.0px;width:19px;height:19px;border:1.5px solid #8a8a8a;background:#fff"></div>
<div class="s" style="left:1266px;top:722.0px;"><i>填</i><i>满</i></div>
<div style="left:813px;top:757px;width:504px;height:1px;background:#d5d5d5"></div>
<div class="s" style="left:813px;top:774.5px;color:#0000ff"><span class="a">[</span><i>音</i><i>乐</i><i>音</i><i>量</i><span class="a">]</span></div>
<div style="left:911.0px;top:773.5px;width:19px;height:19px;border:1.5px solid #8a8a8a;background:#fff"><svg width="16" height="16" viewBox="0 0 16 16" style="position:absolute;left:0;top:0"><path d="M2.8,8 L6.3,11.6 L13,3.6" fill="none" stroke="#000" stroke-width="2.6"/></svg></div>
<div class="s" style="left:933px;top:774.5px;"><i>去</i><span class="a">/</span><i>无</i><i>原</i><i>声</i></div>
<div class="s" style="left:1029.5px;top:774.5px;"><i>背</i><i>景</i><i>音</i><i>量</i><span class="a">:</span></div>
<div style="left:1114.5px;top:768.5px;width:46px;height:29px;background:#fff;border:1px solid #b4b4b4;"></div>
<div class="s" style="left:1117.5px;top:774.5px;"><span class="a">-5</span></div>
<div class="s" style="left:1173.5px;top:774.5px;"><i>前</i><i>景</i><i>音</i><i>量</i><span class="a">:</span></div>
<div style="left:1258px;top:768.5px;width:47px;height:29px;background:#fff;border:1px solid #b4b4b4;"></div>
<div class="s" style="left:1261px;top:774.5px;"><span class="a">0</span></div>
<div style="left:813px;top:809px;width:504px;height:1px;background:#d5d5d5"></div>
<div class="s" style="left:813px;top:828.5px;color:#0000ff"><span class="a">[</span><i>水</i><i>印</i><i>设</i><i>置</i><span class="a">]</span></div>
<div style="left:911.0px;top:827.5px;width:19px;height:19px;border:1.5px solid #8a8a8a;background:#fff"></div>
<div class="s" style="left:933px;top:828.5px;"><i>启</i><i>用</i></div>
<div style="left:995.5px;top:828.3px;width:19px;height:19px;border-radius:50%;border:1.5px solid #9a9a9a;background:#fff"><div style="left:calc(50% - 5px);top:calc(50% - 5px);width:10px;height:10px;border-radius:50%;background:#3c3c3c"></div></div>
<div class="s" style="left:1017px;top:828.5px;"><i>左</i><i>上</i></div>
<div style="left:1080.0px;top:828.3px;width:19px;height:19px;border-radius:50%;border:1.5px solid #9a9a9a;background:#fff"></div>
<div class="s" style="left:1101px;top:828.5px;"><i>右</i><i>上</i></div>
<div style="left:1164.0px;top:828.3px;width:19px;height:19px;border-radius:50%;border:1.5px solid #9a9a9a;background:#fff"></div>
<div class="s" style="left:1185px;top:828.5px;"><i>左</i><i>下</i></div>
<div style="left:1248.5px;top:828.3px;width:19px;height:19px;border-radius:50%;border:1.5px solid #9a9a9a;background:#fff"></div>
<div class="s" style="left:1270px;top:828.5px;"><i>右</i><i>下</i></div>
<div class="s" style="left:813px;top:865.0px;"><i>路</i><i>径</i><span class="a">:</span></div>
<div style="left:861px;top:859px;width:277px;height:29px;background:#fff;border:1px solid #b4b4b4;"></div>
<div style="left:1137.5px;top:859px;width:47px;height:29px;background:linear-gradient(#f3f3f3,#e7e7e7);border:1px solid #c0c0c0"></div>
<div class="s" style="left:1147.5px;top:865.0px;color:#555"><span class="a">...</span></div>
<div style="left:1211.5px;top:864.0px;width:19px;height:19px;border:1.5px solid #8a8a8a;background:#fff"><svg width="16" height="16" viewBox="0 0 16 16" style="position:absolute;left:0;top:0"><path d="M2.8,8 L6.3,11.6 L13,3.6" fill="none" stroke="#000" stroke-width="2.6"/></svg></div>
<div class="s" style="left:1232px;top:865.0px;"><i>智</i><i>能</i><i>大</i><i>小</i></div>
<div style="left:813px;top:902px;width:504px;height:1px;background:#d5d5d5"></div>
<div class="s" style="left:813px;top:921.5px;color:#0000ff"><span class="a">[</span><i>横</i><i>屏</i><i>竖</i><i>屏</i><span class="a">]</span></div>
<div style="left:911.5px;top:920.5px;width:19px;height:19px;border:1.5px solid #8a8a8a;background:#fff"></div>
<div class="s" style="left:933px;top:921.5px;"><i>启</i><i>用</i></div>
<div class="s" style="left:992.5px;top:921.5px;"><i>宽</i></div>
<div style="left:1018px;top:915.5px;width:47px;height:29px;background:#fff;border:1px solid #b4b4b4;"></div>
<div class="s" style="left:1021px;top:921.5px;"><span class="a">720</span></div>
<div class="s" style="left:1077.5px;top:921.5px;"><i>高</i></div>
<div style="left:1101.5px;top:915.5px;width:48px;height:29px;background:#fff;border:1px solid #b4b4b4;"></div>
<div class="s" style="left:1104.5px;top:921.5px;"><span class="a">1280</span></div>
<div class="s" style="left:1161.5px;top:921.5px;"><i>填</i><i>充</i><i>颜</i><i>色</i><span class="a">:</span></div>
<div style="left:1245.5px;top:915.5px;width:58.0px;height:28.0px;background:#f0f0f0;border:2px solid;border-color:#8a8a8a #e8e8e8 #e8e8e8 #8a8a8a">
<div style="left:4px;top:2px;width:25px;height:20px;background:#000;border:1px solid #000"></div>
<div style="right:1px;top:1px;width:24px;height:22px;background:#f0f0f0;border:1.5px solid;border-color:#fff #6a6a6a #6a6a6a #fff"><svg width="12" height="7" style="position:absolute;left:5px;top:7px" viewBox="0 0 12 7"><path d="M1,1 L11,1 L6,6 Z" fill="#000"/></svg></div>
</div>
<div style="left:814px;top:954px;width:503px;height:55px;border:1px solid #dcdcdc"></div>
<div style="left:827.0px;top:973.8px;width:19px;height:19px;border-radius:50%;border:1.5px solid #9a9a9a;background:#fff"></div>
<div class="s" style="left:849px;top:974.0px;"><i>模</i><i>糊</i><i>填</i><i>充</i></div>
<div style="left:946.5px;top:973.8px;width:19px;height:19px;border-radius:50%;border:1.5px solid #9a9a9a;background:#fff"><div style="left:calc(50% - 5px);top:calc(50% - 5px);width:10px;height:10px;border-radius:50%;background:#3c3c3c"></div></div>
<div class="s" style="left:968px;top:974.0px;"><i>颜</i><i>色</i><i>填</i><i>充</i></div>
<div style="left:1067.0px;top:973.8px;width:19px;height:19px;border-radius:50%;border:1.5px solid #9a9a9a;background:#fff"></div>
<div class="s" style="left:1089px;top:974.0px;"><i>图</i><i>片</i><i>填</i><i>充</i></div>
<div style="left:1187.0px;top:973.8px;width:19px;height:19px;border-radius:50%;border:1.5px solid #9a9a9a;background:#fff"></div>
<div class="s" style="left:1209px;top:974.0px;"><i>三</i><i>屏</i><i>填</i><i>充</i></div>
</body></html>
